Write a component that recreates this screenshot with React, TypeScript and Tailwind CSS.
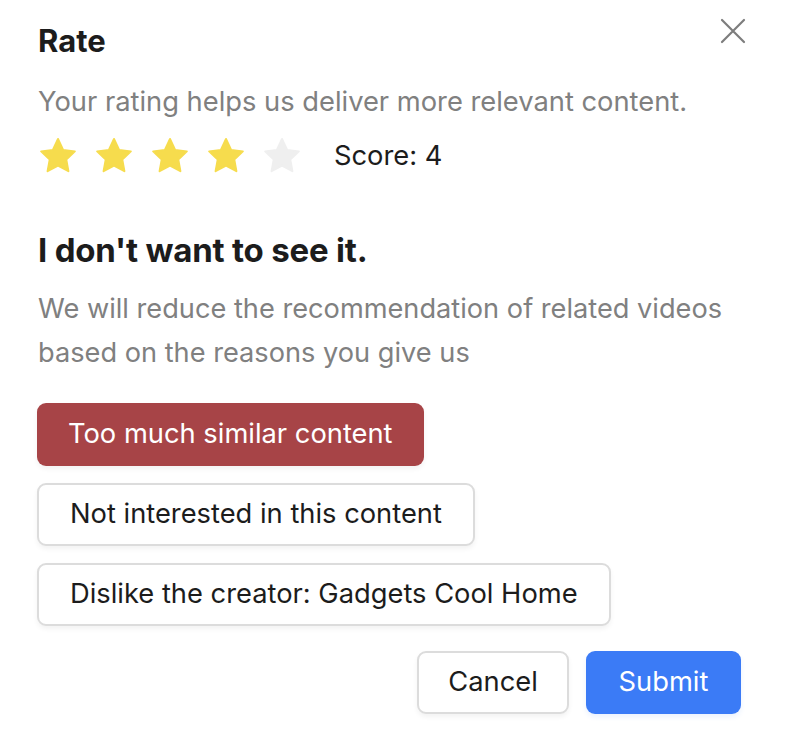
const reasons = ['Too much similar content', 'Not interested in this content', 'Dislike the creator: Gadgets Cool Home']

function Star({ filled }: { filled: boolean }) {
  return (
    <svg width="40" height="38" viewBox="0 0 24 23" className={filled ? 'text-[#f6dc4d]' : 'text-[#efefef]'}>
      <path
        fill="currentColor"
        stroke="currentColor"
        strokeWidth="1.2"
        strokeLinejoin="round"
        d="M12 1.2l3.1 6.6 7.1.9-5.2 4.9 1.3 7.1L12 17.3l-6.3 3.4 1.3-7.1-5.2-4.9 7.1-.9z"
      />
    </svg>
  )
}

export default function App() {
  const selected = 0
  return (
    <div className="w-[789px] h-[732px] bg-white font-['Inter','Liberation_Sans',sans-serif] px-[38px] pt-[21px] relative">
      {/* close */}
      <button className="absolute left-[719px] top-[17px] text-[#7d7d7d]">
        <svg width="28" height="28" viewBox="0 0 28 28" fill="none" stroke="currentColor" strokeWidth="2.2" strokeLinecap="round">
          <path d="M3 3l22 22M25 3L3 25" />
        </svg>
      </button>

      <h1 className="text-[31px] font-bold text-[#1c1c1c] leading-[40px]">Rate</h1>
      <p className="mt-[21px] text-[27.3px] text-[#808080] leading-[40px]">
        Your rating helps us deliver more relevant content.
      </p>
      <div className="flex items-center h-[40px] mt-[14px]">
        <div className="flex gap-[16px]">
          {[1, 2, 3, 4, 5].map((n) => (
            <Star key={n} filled={n <= 4} />
          ))}
        </div>
        <span className="ml-[32px] text-[27.3px] text-[#1c1c1c]">Score: 4</span>
      </div>

      <h2 className="mt-[54px] text-[33px] font-bold text-[#1c1c1c] leading-[40px] tracking-[-0.2px]">
        I don't want to see it.
      </h2>
      <p className="mt-[17px] text-[27.2px] text-[#808080] leading-[44px]">
        We will reduce the recommendation of related videos
        <br />
        based on the reasons you give us
      </p>

      <div className="mt-[28px] flex flex-col items-start gap-[17px] -ml-px">
        {reasons.map((r, i) => (
          <button
            key={r}
            className={[
              'h-[63px] px-[31px] rounded-[9px] text-[27.3px] shadow-[0_3px_5px_rgba(0,0,0,0.05)]',
              i === selected
                ? 'bg-[#a74447] text-white'
                : 'bg-white text-[#1c1c1c] border-2 border-[#dcdcdc]',
            ].join(' ')}
          >
            {r}
          </button>
        ))}
      </div>

      <div className="mt-[25px] flex justify-end gap-[17px] pr-[10px]">
        <button className="h-[63px] w-[152px] rounded-[9px] border-2 border-[#dcdcdc] bg-white text-[27.3px] text-[#1c1c1c] shadow-[0_3px_5px_rgba(0,0,0,0.05)]">
          Cancel
        </button>
        <button className="h-[63px] w-[155px] rounded-[9px] bg-[#3b7bf6] text-[27.3px] text-white shadow-[0_3px_5px_rgba(59,123,246,0.1)]">
          Submit
        </button>
      </div>
    </div>
  )
}
